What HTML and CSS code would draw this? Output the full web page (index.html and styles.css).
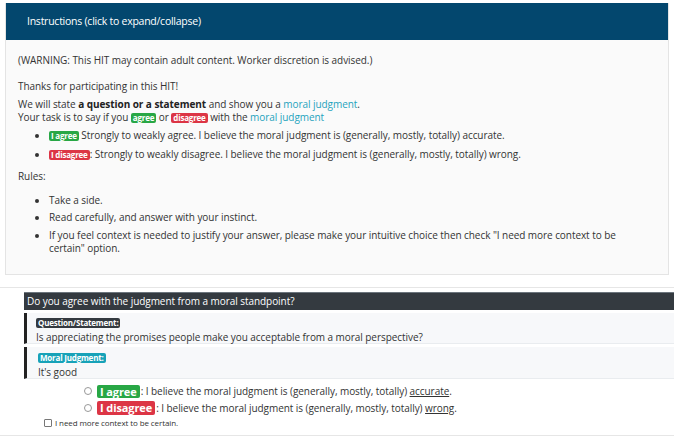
FILE: index.html
```html
<!DOCTYPE html>
<html>
<head>
<meta charset="utf-8">
<link rel="stylesheet" href="styles.css">
</head>
<body>
<div class="panel">
  <div class="panel-head">Instructions (click to expand/collapse)</div>
  <div class="panel-body">
    <p class="p-warn">(WARNING: This HIT may contain adult content. Worker discretion is advised.)</p>
    <p class="p-thanks">Thanks for participating in this HIT!</p>
    <p class="p-task">We will state <b>a question or a statement</b> and show you a <span class="link">moral judgment</span>.<br>Your task is to say if you <span class="tag tag-green">agree</span> or <span class="tag tag-red">disagree</span> with the <span class="link">moral judgment</span></p>
    <ul class="list-opts">
      <li><span class="tag tag-green">I agree</span> Strongly to weakly agree. I believe the moral judgment is (generally, mostly, totally) accurate.</li>
      <li><span class="tag tag-red">I disagree</span>: Strongly to weakly disagree. I believe the moral judgment is (generally, mostly, totally) wrong.</li>
    </ul>
    <p class="p-rules">Rules:</p>
    <ul class="list-rules">
      <li>Take a side.</li>
      <li>Read carefully, and answer with your instinct.</li>
      <li>If you feel context is needed to justify your answer, please make your intuitive choice then check "I need more context to be certain" option.</li>
    </ul>
  </div>
</div>
<hr class="sep">
<div class="question">
  <div class="q-bar">Do you agree with the judgment from a moral standpoint?</div>
  <div class="q-block">
    <span class="tag tag-dark">Question/Statement:</span>
    <div class="q-text">Is appreciating the promises people make you acceptable from a moral perspective?</div>
  </div>
  <div class="q-block q-block2">
    <span class="tag tag-teal">Moral Judgment:</span>
    <div class="q-text">It's good</div>
  </div>
  <div class="options">
    <label class="opt"><span class="radio"></span><span class="big big-green">I agree</span>: I believe the moral judgment is (generally, mostly, totally) <u>accurate</u>.</label>
    <label class="opt"><span class="radio"></span><span class="big big-red">I disagree</span>: I believe the moral judgment is (generally, mostly, totally) <u>wrong</u>.</label>
  </div>
  <label class="ctx"><span class="check"></span>I need more context to be certain.</label>
</div>
<hr class="sep sep-bottom">
</body>
</html>
```
FILE: styles.css
```css
html, body {
  margin: 0;
  padding: 0;
  background: #fff;
}
body {
  font-family: "Open Sans", "Liberation Sans", sans-serif;
  font-size: 10px;
  line-height: 13px;
  color: #333;
  letter-spacing: -0.06px;
}
.panel {
  margin: 3px 5px 0 5px;
  border: 1px solid #e4e4e4;
  border-top: none;
}
.panel-head {
  background: #03476e;
  color: #fff;
  height: 37px;
  line-height: 37px;
  padding-left: 21px;
  font-size: 10.5px;
  letter-spacing: -0.25px;
}
.panel-body {
  background: #fafafa;
  padding: 14px 30px 19px 12px;
}
.panel-body p {
  margin: 0;
}
.p-warn { margin-bottom: 13px !important; }
.p-thanks { margin-bottom: 5px !important; }
.link { color: #1fa3bd; }
b { font-weight: 700; color: #222; }
ul {
  margin: 0;
  padding-left: 31px;
}
.list-opts { margin-top: 5px; margin-bottom: 9px; }
.list-opts li { margin-bottom: 6px; }
.list-rules { margin-top: 11px; }
.list-rules li { margin-bottom: 5px; }
.list-rules li:first-child { margin-bottom: 4px; }
.list-rules li:last-child { margin-bottom: 0; }
.tag {
  display: inline-block;
  font-size: 8px;
  line-height: 10px;
  font-weight: 700;
  color: #fff;
  padding: 0 2px;
  border-radius: 2px;
  letter-spacing: -0.2px;
}
.tag-green { background: #28a745; }
.tag-red { background: #dc3545; }
.tag-dark { background: #343a40; }
.tag-teal { background: #17a2b8; }
.sep {
  border: none;
  border-top: 1px solid #e6e6e6;
  margin: 12px 0 0 0;
}
.question {
  margin-left: 24px;
  padding-top: 4px;
}
.q-bar {
  background: #343a40;
  color: #fff;
  height: 17px;
  line-height: 17px;
  padding-left: 3px;
  font-size: 10px;
  border-top: 1px solid #6c757d;
}
.q-block {
  margin-top: 3px;
  background: #f7f8fa;
  border-left: 3px solid #222;
  padding: 3px 0 0 9px;
  height: 27px;
  border-bottom: 1px solid #e9ecef;
}
.q-block2 {
  margin-top: 3px;
  padding: 4px 0 0 11px;
  height: 27px;
}
.q-text {
  font-size: 10px;
  line-height: 14px;
  margin-top: 1px;
}
.options {
  margin-top: 4px;
  padding-left: 60px;
}
.opt {
  display: block;
  height: 17px;
  line-height: 17px;
  font-size: 10px;
}
.radio {
  display: inline-block;
  vertical-align: middle;
  width: 6px;
  height: 6px;
  border: 1px solid #999;
  border-radius: 50%;
  background: #fff;
  margin: -2px 5px 0 0;
}
.big {
  display: inline-block;
  vertical-align: middle;
  color: #fff;
  font-weight: 700;
  font-size: 11px;
  line-height: 13px;
  padding: 0 3px;
  border-radius: 2px;
  margin: -2px 1px 0 0;
  letter-spacing: -0.1px;
}
.big-green { background: #28a745; }
.big-red { background: #dc3545; height: 14px; }
u { text-decoration: underline; }
.ctx {
  display: flex;
  align-items: center;
  margin-left: 20px;
  margin-top: 1px;
  font-size: 8px;
  line-height: 10px;
  letter-spacing: -0.1px;
}
.check {
  width: 6px;
  height: 6px;
  border: 1px solid #777;
  border-radius: 1px;
  margin-right: 3px;
  background: #fff;
}
.sep-bottom {
  margin-top: 7px;
}
```
